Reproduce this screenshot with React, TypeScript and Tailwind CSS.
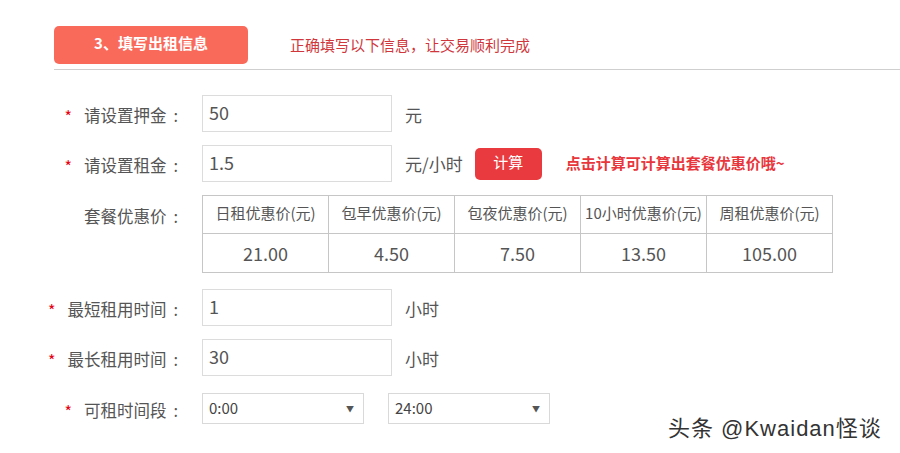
import React from "react";

const font = { fontFamily: '"Noto Sans CJK SC", "Noto Sans", sans-serif' };

function Label({ text, star = true }: { text: string; star?: boolean }) {
  return (
    <div className="w-[148px] shrink-0 flex items-center justify-end pr-[24px] pt-[3px] text-[16.5px] text-[#555] whitespace-nowrap">
      {star && <span className="text-[#e60012] mr-[12px] text-[16px] leading-none mt-[2px]">*</span>}
      <span>{text}</span>
      <span className="ml-[7px]">:</span>
    </div>
  );
}

function Input({ value }: { value: string }) {
  return (
    <div className="w-[190px] h-[37px] border border-[#dcdcdc] bg-white flex items-center pl-[6px] pb-[3px] text-[18px] text-[#555]">
      {value}
    </div>
  );
}

function Select({ value }: { value: string }) {
  return (
    <div className="w-[162px] h-[31px] border border-[#d9d9d9] bg-white flex items-center justify-between pl-[6px] pr-[9px] text-[15px] text-[#444]">
      <span>{value}</span>
      <span className="text-[8px] text-[#555]">▼</span>
    </div>
  );
}

export default function App() {
  const heads = ["日租优惠价(元)", "包早优惠价(元)", "包夜优惠价(元)", "10小时优惠价(元)", "周租优惠价(元)"];
  const vals = ["21.00", "4.50", "7.50", "13.50", "105.00"];
  return (
    <div className="relative w-[900px] h-[453px] bg-white overflow-hidden" style={font}>
      <div className="pl-[54px]">
        <div className="flex items-center border-b border-[#cfcfcf] pt-[26px] pb-[5px]">
          <div className="w-[194px] h-[38px] rounded-[5px] bg-[#fa6a5b] flex items-center justify-center text-white text-[15px] font-bold pb-[3px]">
            3、填写出租信息
          </div>
          <div className="ml-[42px] text-[15px] text-[#d0373d]">正确填写以下信息，让交易顺利完成</div>
        </div>

        <div className="flex items-center mt-[25px]">
          <Label text="请设置押金" />
          <Input value="50" />
          <span className="ml-[13px] text-[17px] text-[#555] mt-[3px]">元</span>
        </div>

        <div className="flex items-center mt-[13px]">
          <Label text="请设置租金" />
          <Input value="1.5" />
          <span className="ml-[13px] text-[17px] text-[#555]">元/小时</span>
          <div className="ml-[12px] w-[67px] h-[32px] rounded-[5px] bg-[#e93b3f] text-white text-[15px] flex items-center justify-center pb-[2px]">
            计算
          </div>
          <span className="ml-[24px] text-[15px] font-bold text-[#e8373c]">点击计算可计算出套餐优惠价哦~</span>
        </div>

        <div className="flex items-start mt-[13px]">
          <div className="h-[39px] flex items-center">
            <Label text="套餐优惠价" star={false} />
          </div>
          <div className="border-t border-l border-[#c6c6c6]">
            <div className="flex">
              {heads.map((h) => (
                <div key={h} className="w-[126px] h-[38px] border-r border-b border-[#c6c6c6] flex items-center justify-center text-[15px] text-[#555] pb-[2px]">
                  {h}
                </div>
              ))}
            </div>
            <div className="flex">
              {vals.map((v) => (
                <div key={v} className="w-[126px] h-[39px] border-r border-b border-[#c6c6c6] flex items-center justify-center text-[18px] text-[#555]">
                  {v}
                </div>
              ))}
            </div>
          </div>
        </div>

        <div className="flex items-center mt-[16px]">
          <Label text="最短租用时间" />
          <Input value="1" />
          <span className="ml-[13px] text-[17px] text-[#555] mt-[3px]">小时</span>
        </div>

        <div className="flex items-center mt-[13px]">
          <Label text="最长租用时间" />
          <Input value="30" />
          <span className="ml-[13px] text-[17px] text-[#555] mt-[3px]">小时</span>
        </div>

        <div className="flex items-center mt-[17px]">
          <Label text="可租时间段" />
          <Select value="0:00" />
          <div className="ml-[24px]">
            <Select value="24:00" />
          </div>
        </div>
      </div>

      <div
        className="absolute left-[668px] top-[412px] text-[22px] tracking-[1px] text-[#333] whitespace-nowrap"
        style={{
          fontFamily: '"Liberation Sans", "Noto Sans CJK SC", sans-serif',
          textShadow: "1px 1px 0 #fff, -1px -1px 0 #fff, 1px -1px 0 #fff, -1px 1px 0 #fff",
        }}
      >
        头条 @Kwaidan怪谈
      </div>
    </div>
  );
}
